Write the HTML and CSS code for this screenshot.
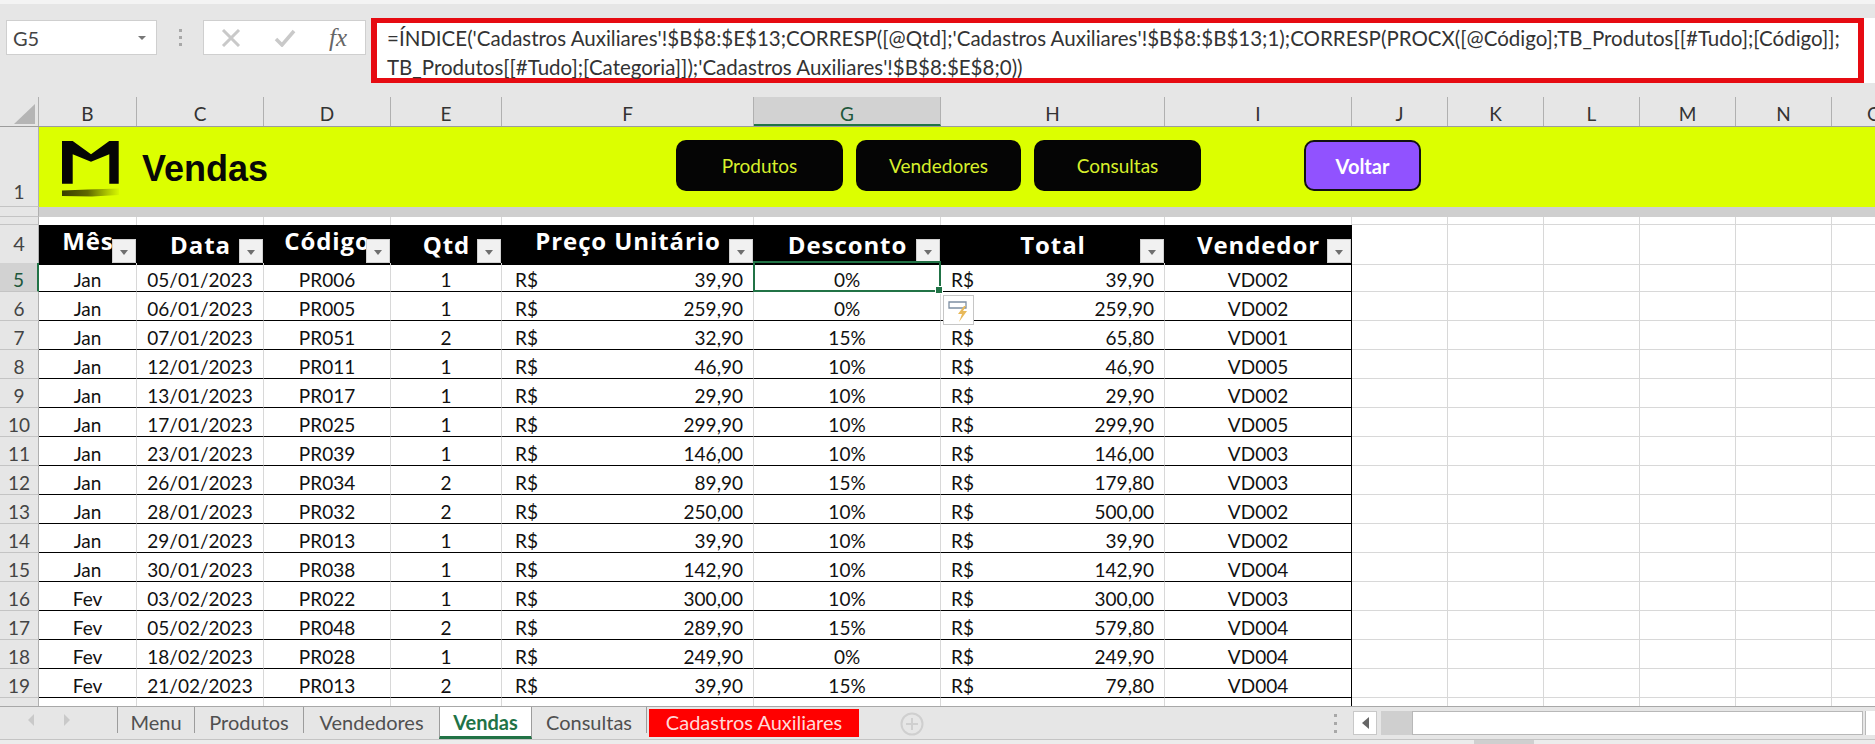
FILE: index.html
```html
<!DOCTYPE html>
<html lang="pt-BR">
<head>
<meta charset="utf-8">
<title>Vendas</title>
<link rel="stylesheet" href="styles.css">
</head>
<body>
<div class="app">
  <div class="top-strip"></div>
  <div class="formula-area">
    <div class="name-box"><span>G5</span><i class="caret"></i></div>
    <div class="grip"><b></b><b></b><b></b></div>
    <div class="fx-box">
      <svg class="fx-icon" width="20" height="18" viewBox="0 0 20 18"><path d="M2 1 L18 17 M18 1 L2 17" stroke="#c9c9c9" stroke-width="3" fill="none"/></svg>
      <svg class="fx-icon" width="22" height="18" viewBox="0 0 22 18"><path d="M2 10 L8 16 L20 2" stroke="#c9c9c9" stroke-width="3.5" fill="none"/></svg>
      <span class="fx-text">fx</span>
    </div>
    <div class="formula-box">
      <div class="formula-mark">=ÍNDICE('Cadastros Auxiliares'!$B$8:$E$13;CORRESP([@Qtd];'Cadastros Auxiliares'!$B$8:$B$13;1);CORRESP(PROCX([@Código];TB_Produtos[[#Tudo];[Código]];<br>TB_Produtos[[#Tudo];[Categoria]]);'Cadastros Auxiliares'!$B$8:$E$8;0))</div>
    </div>
  </div>

  <div class="row col-heads">
    <div class="corner"><svg width="21" height="20" viewBox="0 0 21 20"><path d="M21 0V20H0Z" fill="#b5b5b5"/></svg></div>
    <div class="ch">B</div><div class="ch">C</div><div class="ch">D</div><div class="ch">E</div><div class="ch">F</div>
    <div class="ch ch-on">G</div><div class="ch">H</div><div class="ch">I</div><div class="ch">J</div><div class="ch">K</div>
    <div class="ch">L</div><div class="ch">M</div><div class="ch">N</div><div class="ch ch-cut">O</div>
  </div>

  <div class="sheet">
    <div class="banner-row">
      <div class="rh rh-banner">1</div>
      <div class="banner">
        <svg class="logo" width="58" height="56" viewBox="0 0 58 56">
          <defs><linearGradient id="smear" x1="0" x2="1" y1="0" y2="0"><stop offset="0" stop-color="#3a3e00"/><stop offset=".45" stop-color="#5f6800"/><stop offset=".8" stop-color="#aec800"/><stop offset="1" stop-color="#d6f800"/></linearGradient></defs>
          <path d="M0 0H10.7L29 13.3L47.3 0H56.7V42.7H47.3V13.3L29 20.7L10.7 13.3V42.7H0Z" fill="#050505"/>
          <path d="M0 49.5L26 48.5L57 47.5V54L30 55.5L0 55Z" fill="url(#smear)"/>
        </svg>
        <h1 class="title">Vendas</h1>
        <nav class="nav">
          <a class="btn btn-produtos">Produtos</a>
          <a class="btn btn-vendedores">Vendedores</a>
          <a class="btn btn-consultas">Consultas</a>
          <a class="btn btn-back">Voltar</a>
        </nav>
      </div>
    </div>
    <div class="band-row"><div class="rh rh-band"></div><div class="band"></div></div>
    <div class="row spacer-row"><div class="rh"></div><div class="gc"></div><div class="gc"></div><div class="gc"></div><div class="gc"></div><div class="gc"></div><div class="gc"></div><div class="gc"></div><div class="gc"></div><div class="fill"></div></div>

    <div class="row head-row">
      <div class="rh">4</div>
      <div class="th raised">Mês<i class="flt"></i></div>
      <div class="th">Data<i class="flt"></i></div>
      <div class="th raised">Código<i class="flt"></i></div>
      <div class="th">Qtd<i class="flt"></i></div>
      <div class="th raised">Preço Unitário<i class="flt"></i></div>
      <div class="th">Desconto<i class="flt"></i></div>
      <div class="th">Total<i class="flt"></i></div>
      <div class="th">Vendedor<i class="flt"></i></div>
      <div class="fill"></div>
    </div>

    <div class="row data"><div class="rh rh-on">5</div><div class="td">Jan</div><div class="td">05/01/2023</div><div class="td">PR006</div><div class="td">1</div><div class="td money price"><span>R$</span><span>39,90</span></div><div class="td selected">0%<i class="handle"></i></div><div class="td money total"><span>R$</span><span>39,90</span></div><div class="td last">VD002</div><div class="fill"></div></div>
    <div class="row data"><div class="rh">6</div><div class="td">Jan</div><div class="td">06/01/2023</div><div class="td">PR005</div><div class="td">1</div><div class="td money price"><span>R$</span><span>259,90</span></div><div class="td">0%</div><div class="td money total"><span>R$</span><span>259,90</span><div class="quick"><svg width="26" height="26" viewBox="0 0 26 26"><path d="M4 5H21V11H4Z" fill="none" stroke="#7d8fa3" stroke-width="1.3"/><path d="M19 9L13 17H17L14 25L22 14H18L21 9Z" fill="#e8b95a"/></svg></div></div><div class="td last">VD002</div><div class="fill"></div></div>
    <div class="row data"><div class="rh">7</div><div class="td">Jan</div><div class="td">07/01/2023</div><div class="td">PR051</div><div class="td">2</div><div class="td money price"><span>R$</span><span>32,90</span></div><div class="td">15%</div><div class="td money total"><span>R$</span><span>65,80</span></div><div class="td last">VD001</div><div class="fill"></div></div>
    <div class="row data"><div class="rh">8</div><div class="td">Jan</div><div class="td">12/01/2023</div><div class="td">PR011</div><div class="td">1</div><div class="td money price"><span>R$</span><span>46,90</span></div><div class="td">10%</div><div class="td money total"><span>R$</span><span>46,90</span></div><div class="td last">VD005</div><div class="fill"></div></div>
    <div class="row data"><div class="rh">9</div><div class="td">Jan</div><div class="td">13/01/2023</div><div class="td">PR017</div><div class="td">1</div><div class="td money price"><span>R$</span><span>29,90</span></div><div class="td">10%</div><div class="td money total"><span>R$</span><span>29,90</span></div><div class="td last">VD002</div><div class="fill"></div></div>
    <div class="row data"><div class="rh">10</div><div class="td">Jan</div><div class="td">17/01/2023</div><div class="td">PR025</div><div class="td">1</div><div class="td money price"><span>R$</span><span>299,90</span></div><div class="td">10%</div><div class="td money total"><span>R$</span><span>299,90</span></div><div class="td last">VD005</div><div class="fill"></div></div>
    <div class="row data"><div class="rh">11</div><div class="td">Jan</div><div class="td">23/01/2023</div><div class="td">PR039</div><div class="td">1</div><div class="td money price"><span>R$</span><span>146,00</span></div><div class="td">10%</div><div class="td money total"><span>R$</span><span>146,00</span></div><div class="td last">VD003</div><div class="fill"></div></div>
    <div class="row data"><div class="rh">12</div><div class="td">Jan</div><div class="td">26/01/2023</div><div class="td">PR034</div><div class="td">2</div><div class="td money price"><span>R$</span><span>89,90</span></div><div class="td">15%</div><div class="td money total"><span>R$</span><span>179,80</span></div><div class="td last">VD003</div><div class="fill"></div></div>
    <div class="row data"><div class="rh">13</div><div class="td">Jan</div><div class="td">28/01/2023</div><div class="td">PR032</div><div class="td">2</div><div class="td money price"><span>R$</span><span>250,00</span></div><div class="td">10%</div><div class="td money total"><span>R$</span><span>500,00</span></div><div class="td last">VD002</div><div class="fill"></div></div>
    <div class="row data"><div class="rh">14</div><div class="td">Jan</div><div class="td">29/01/2023</div><div class="td">PR013</div><div class="td">1</div><div class="td money price"><span>R$</span><span>39,90</span></div><div class="td">10%</div><div class="td money total"><span>R$</span><span>39,90</span></div><div class="td last">VD002</div><div class="fill"></div></div>
    <div class="row data"><div class="rh">15</div><div class="td">Jan</div><div class="td">30/01/2023</div><div class="td">PR038</div><div class="td">1</div><div class="td money price"><span>R$</span><span>142,90</span></div><div class="td">10%</div><div class="td money total"><span>R$</span><span>142,90</span></div><div class="td last">VD004</div><div class="fill"></div></div>
    <div class="row data"><div class="rh">16</div><div class="td">Fev</div><div class="td">03/02/2023</div><div class="td">PR022</div><div class="td">1</div><div class="td money price"><span>R$</span><span>300,00</span></div><div class="td">10%</div><div class="td money total"><span>R$</span><span>300,00</span></div><div class="td last">VD003</div><div class="fill"></div></div>
    <div class="row data"><div class="rh">17</div><div class="td">Fev</div><div class="td">05/02/2023</div><div class="td">PR048</div><div class="td">2</div><div class="td money price"><span>R$</span><span>289,90</span></div><div class="td">15%</div><div class="td money total"><span>R$</span><span>579,80</span></div><div class="td last">VD004</div><div class="fill"></div></div>
    <div class="row data"><div class="rh">18</div><div class="td">Fev</div><div class="td">18/02/2023</div><div class="td">PR028</div><div class="td">1</div><div class="td money price"><span>R$</span><span>249,90</span></div><div class="td">0%</div><div class="td money total"><span>R$</span><span>249,90</span></div><div class="td last">VD004</div><div class="fill"></div></div>
    <div class="row data"><div class="rh">19</div><div class="td">Fev</div><div class="td">21/02/2023</div><div class="td">PR013</div><div class="td">2</div><div class="td money price"><span>R$</span><span>39,90</span></div><div class="td">15%</div><div class="td money total"><span>R$</span><span>79,80</span></div><div class="td last">VD004</div><div class="fill"></div></div>
    <div class="row data tail"><div class="rh"></div><div class="gc"></div><div class="gc"></div><div class="gc"></div><div class="gc"></div><div class="gc"></div><div class="gc"></div><div class="gc"></div><div class="gc last"></div><div class="fill"></div></div>
  </div>

  <div class="tabbar">
    <div class="tab-nav">
      <svg width="8" height="14" viewBox="0 0 8 14"><path d="M7 1V13L1 7Z" fill="#c9c9c9"/></svg>
      <svg width="8" height="14" viewBox="0 0 8 14"><path d="M1 1V13L7 7Z" fill="#c9c9c9"/></svg>
    </div>
    <div class="tab tab-menu">Menu</div>
    <div class="tab tab-produtos">Produtos</div>
    <div class="tab tab-vendedores">Vendedores</div>
    <div class="tab tab-active">Vendas</div>
    <div class="tab tab-consultas">Consultas</div>
    <div class="tab tab-red">Cadastros Auxiliares</div>
    <svg class="add" width="24" height="24" viewBox="0 0 24 24"><circle cx="12" cy="12" r="10.5" fill="none" stroke="#cfcfcf" stroke-width="2"/><path d="M12 6V18M6 12H18" stroke="#cfcfcf" stroke-width="2"/></svg>
    <div class="tab-grip"><b></b><b></b><b></b></div>
    <div class="hscroll">
      <div class="sb-btn"><svg width="7" height="12" viewBox="0 0 7 12"><path d="M7 0V12L0 6Z" fill="#666"/></svg></div>
      <div class="sb-track"></div>
      <div class="sb-thumb"></div>
      <div class="sb-end"></div>
    </div>
  </div>
  <div class="status"><div class="status-mark"></div></div>
</div>
</body>
</html>
```
FILE: styles.css
```css
* { box-sizing: border-box; }
html, body { margin: 0; padding: 0; }
body { width: 1875px; height: 744px; overflow: hidden; background: #e6e6e6; font-family: "Lato", "Liberation Sans", sans-serif; font-size: 19px; color: #222; }
.app { width: 1875px; height: 744px; display: flex; flex-direction: column; overflow: hidden; }

.top-strip { height: 4px; background: #f4f4f4; box-shadow: 0 2px 5px rgba(0,0,0,.14); flex: none; }

.formula-area { height: 93px; flex: none; display: flex; align-items: flex-start; padding: 14px 0 0 6px; background: #e6e6e6; }
.name-box { width: 151px; height: 35px; margin-top: 2px; background: #fff; border: 1px solid #cfcfcf; display: flex; align-items: center; justify-content: space-between; padding: 0 10px 0 6px; color: #444; font-size: 20px; }
.caret { width: 0; height: 0; border: 4px solid transparent; border-top: 4px solid #777; margin-top: 4px; }
.grip { width: 46px; height: 35px; margin-top: 2px; display: flex; flex-direction: column; align-items: center; justify-content: center; gap: 4px; }
.grip b, .tab-grip b { width: 3px; height: 3px; background: #a8a8a8; display: block; }
.fx-box { width: 163px; height: 35px; margin-top: 2px; background: #fff; border: 1px solid #cfcfcf; display: flex; align-items: center; padding-left: 17px; gap: 34px; }
.fx-icon { flex: none; }
.fx-box svg + svg { margin-left: -1px; }
.fx-text { font-family: "Liberation Serif", serif; font-style: italic; font-size: 25px; font-weight: 400; color: #666; margin-left: -1px; }
.formula-box { flex: 1; height: 65px; margin: 0 0 0 5px; background: #fff; }
.formula-mark { width: 1493px; height: 65px; border: 5px solid #e60b12; border-left-width: 6px; border-right-width: 6px; padding: 1px 0 0 10px; line-height: 29px; white-space: nowrap; color: #333; font-size: 20.5px; background: #fff; }

.row { display: grid; grid-template-columns: 39px 98px 127px 127px 111px 252px 187px 224px 187px 96px 96px 96px 96px 96px 43px; flex: none; }
.col-heads { height: 30px; background: #e6e6e6; border-bottom: 1px solid #9c9c9c; }
.corner { display: flex; align-items: flex-end; padding: 0 0 2px 14px; border-right: 1px solid #b0b0b0; }
.ch { text-align: center; line-height: 33px; height: 29px; color: #333; border-right: 1px solid #b0b0b0; }
.ch-on { background: #d2d2d2; color: #20573b; border-bottom: 2px solid #217346; line-height: 33px; }
.ch-cut { border-right: 0; text-align: left; padding-left: 35px; }

.sheet { flex: none; height: 579px; background: #fff; overflow: hidden; display: flex; flex-direction: column; }
.rh { background: #e6e6e6; color: #444; text-align: center; border-bottom: 1px solid #c4c4c4; border-right: 1px solid #b0b0b0; line-height: 30px; }
.banner-row { height: 80px; display: flex; flex: none; }
.rh-banner { width: 39px; flex: none; display: flex; align-items: flex-end; justify-content: center; line-height: 28px; }
.banner { flex: 1; background: #dcff00; display: flex; align-items: flex-start; padding-left: 23px; }
.logo { margin-top: 14px; flex: none; }
.title { margin: 20px 0 0 22px; font: 700 36px/44px "Liberation Sans", Arial, sans-serif; color: #080808; width: 534px; }
.nav { display: flex; margin-top: 13px; gap: 13px; }
.btn { height: 51px; background: #050505; color: #d8f02c; border-radius: 10px; display: flex; align-items: center; justify-content: center; font-size: 19px; }
.btn-produtos { width: 167px; }
.btn-vendedores { width: 165px; }
.btn-consultas { width: 167px; }
.btn-back { width: 117px; margin-left: 90px; background: #9152ff; color: #fff; font-weight: 700; border: 2px solid #111; font-size: 20px; }

.band-row { height: 10px; display: flex; flex: none; }
.rh-band { width: 39px; flex: none; }
.band { flex: 1; background: #cfcfcf; }
.spacer-row { height: 8px; }
.spacer-row .rh { border-bottom: 1px solid #c4c4c4; }
.gc { border-right: 1px solid #d8d8d8; }
.fill { grid-column: 10 / -1; background-image: linear-gradient(to right, transparent 95px, #d8d8d8 95px); background-size: 96px 100%; border-bottom: 1px solid #d8d8d8; }

.head-row { height: 38px; }
.head-row .rh { line-height: 36px; font-size: 20px; }
.th { position: relative; background: #000; color: #fff; font: 700 24px/40px "Open Sans", "Liberation Sans", sans-serif; letter-spacing: .9px; text-align: center; white-space: nowrap; }
.raised { line-height: 32px; }
.flt { position: absolute; right: 1px; bottom: 2px; width: 24px; height: 24px; background: #f1f1f1; border: 1px solid #d0d0d0; }
.flt::after { content: ""; position: absolute; left: 7px; top: 10px; border: 4px solid transparent; border-top: 5px solid #6f6f6f; }

.data { height: 29px; }
.td { position: relative; text-align: center; line-height: 33px; height: 29px; color: #111; border-right: 1px solid #d8d8d8; border-bottom: 1.5px solid #000; white-space: nowrap; }
.data .rh { height: 29px; line-height: 33px; }
.rh-on { background: #d2d2d2; color: #20573b; border-right: 2px solid #217346; }
.last { border-right: 1.5px solid #000; }
.money { display: flex; justify-content: space-between; }
.price { padding: 0 10px 0 13px; }
.total { padding: 0 10px 0 10px; }
.selected::after { content: ""; position: absolute; left: -1px; right: -1px; top: -2px; bottom: -1px; border: 2.5px solid #217346; pointer-events: none; }
.handle { position: absolute; right: -3px; bottom: -3px; width: 6px; height: 6px; background: #217346; border: 1px solid #fff; z-index: 2; box-sizing: content-box; }
.quick { position: absolute; left: 2px; top: 3px; width: 31px; height: 30px; background: #fff; border: 1px solid #c6c6c6; z-index: 3; padding: 1px; display: flex; }
.tail { height: 8px; }
.tail .rh { height: 8px; border-bottom: 0; }
.tail .gc { height: 8px; }
.tail .fill { border-bottom: 0; }

.tabbar { height: 34px; flex: none; display: flex; align-items: stretch; background: #e6e6e6; border-top: 1px solid #a8a8a8; border-bottom: 1px solid #c4c4c4; color: #505050; font-size: 20px; }
.tab-nav { width: 118px; flex: none; display: flex; align-items: center; gap: 28px; padding-left: 27px; border-right: 1px solid #9c9c9c; height: 26px; }
.tab { text-align: center; line-height: 30px; border-right: 1px solid #9c9c9c; height: 26px; white-space: nowrap; flex: none; }
.tab-menu { width: 77px; }
.tab-produtos { width: 109px; }
.tab-vendedores { width: 135px; border-right: 0; }
.tab-active { width: 93px; background: #fff; color: #217346; font-weight: 700; height: 32px; border-left: 1px solid #9c9c9c; border-right: 1px solid #9c9c9c; border-bottom: 3px solid #217346; }
.tab-consultas { width: 115px; }
.tab-red { width: 210px; background: #ff0000; color: #ffd9d9; height: 28px; margin: 2px 0 0 2px; border: 0; line-height: 26px; }
.add { margin: 5px 0 0 41px; flex: none; }
.tab-grip { width: 9px; margin-left: auto; display: flex; flex-direction: column; align-items: center; justify-content: center; gap: 5px; flex: none; }
.hscroll { width: 535px; flex: none; display: flex; align-items: flex-start; padding: 4px 0 0 13px; }
.sb-btn { width: 24px; height: 24px; background: #fff; border: 1px solid #c8c8c8; display: flex; align-items: center; justify-content: center; flex: none; }
.sb-track { width: 35px; height: 24px; background: #cfcfcf; flex: none; margin-left: 4px; }
.sb-thumb { width: 451px; height: 24px; background: #fff; border: 1px solid #b8b8b8; flex: none; margin-left: -4px; }
.sb-end { flex: 1; height: 24px; background: #fff; border-left: 1px solid #b8b8b8; margin-left: 2px; }
.status { height: 4px; flex: none; background: #ececec; position: relative; }
.status-mark { position: absolute; left: 1474px; top: 0; width: 60px; height: 4px; background: #cfcfcf; }
```
